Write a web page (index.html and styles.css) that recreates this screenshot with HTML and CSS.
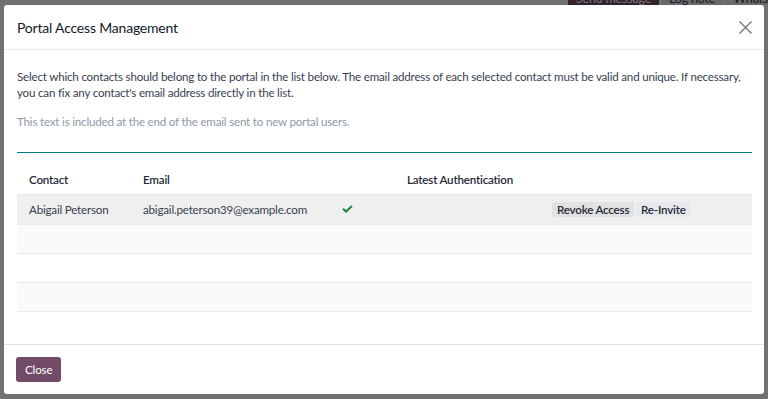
FILE: index.html
```html
<!DOCTYPE html>
<html lang="en">
<head>
    <meta charset="UTF-8">
    <meta name="viewport" content="width=device-width, initial-scale=1.0">
    <title>Portal Access Management</title>
    <link rel="stylesheet" href="styles.css">
</head>
<body>

    <!-- Page behind the dialog -->
    <div class="page">
        <div class="chatter-bar">
            <span class="chatter-btn primary">Send message</span>
            <span class="chatter-btn">Log note</span>
            <span class="chatter-btn">WhatsApp</span>
        </div>
    </div>
    <div class="backdrop"></div>

    <!-- Dialog -->
    <div class="modal">
        <header class="modal-header">
            <h4 class="modal-title">Portal Access Management</h4>
            <button class="btn-close" aria-label="Close">
                <svg width="13" height="13" viewBox="0 0 13 13">
                    <path d="M0.5 0.5 L12.5 12.5 M12.5 0.5 L0.5 12.5" stroke="#6c757d" stroke-width="1.3" fill="none"/>
                </svg>
            </button>
        </header>

        <main class="modal-body">
            <p class="intro">Select which contacts should belong to the portal in the list below. The email address of each selected contact must be valid and unique. If necessary, you can fix any contact's email address directly in the list.</p>

            <div class="welcome-field">
                <span class="placeholder">This text is included at the end of the email sent to new portal users.</span>
            </div>

            <table class="portal-list">
                <colgroup>
                    <col class="col-contact">
                    <col class="col-email">
                    <col class="col-valid">
                    <col class="col-auth">
                    <col>
                </colgroup>
                <thead>
                    <tr>
                        <th>Contact</th>
                        <th>Email</th>
                        <th></th>
                        <th>Latest Authentication</th>
                        <th></th>
                    </tr>
                </thead>
                <tbody>
                    <tr class="row-active">
                        <td>Abigail Peterson</td>
                        <td>abigail.peterson39@example.com</td>
                        <td>
                            <svg class="check" width="11" height="8" viewBox="0 0 11 8">
                                <path d="M1 3.8 L4 6.6 L10 1" stroke="#1f8a3e" stroke-width="2" fill="none"/>
                            </svg>
                        </td>
                        <td></td>
                        <td class="actions">
                            <span class="btn-row btn-revoke">Revoke Access</span>
                            <span class="btn-row btn-invite">Re-Invite</span>
                        </td>
                    </tr>
                    <tr class="row-empty"><td colspan="5"></td></tr>
                    <tr class="row-empty"><td colspan="5"></td></tr>
                    <tr class="row-empty"><td colspan="5"></td></tr>
                </tbody>
            </table>
        </main>

        <footer class="modal-footer">
            <button class="btn-primary">Close</button>
        </footer>
    </div>

</body>
</html>
```

FILE: styles.css
```css
/* Global Reset */
* {
    margin: 0;
    padding: 0;
    box-sizing: border-box;
}

body {
    font-family: 'Lato', 'Noto Sans', sans-serif;
    font-size: 11.6px;
    letter-spacing: -0.2px;
    color: #374151;
    background-color: #ffffff;
    width: 768px;
    height: 399px;
    overflow: hidden;
    position: relative;
}

/* Page behind */
.page {
    height: 399px;
    background: #f9fafb;
    overflow: hidden;
}

.chatter-bar {
    display: flex;
    gap: 2px;
    padding-left: 568px;
    margin-top: -8px;
}

.chatter-btn {
    font-size: 12.5px;
    line-height: 13px;
    padding: 0 8px;
    color: #374151;
    background: #e7e9ed;
    white-space: nowrap;
}

.chatter-btn.primary {
    background: #714b67;
    color: #ffffff;
}

.backdrop {
    position: absolute;
    inset: 0;
    background: rgba(0, 0, 0, 0.55);
}

/* Dialog */
.modal {
    position: absolute;
    left: 4px;
    top: 5px;
    width: 760px;
    height: 389px;
    background: #ffffff;
    border-radius: 3px;
    display: flex;
    flex-direction: column;
}

.modal-header {
    height: 45px;
    display: flex;
    align-items: center;
    justify-content: space-between;
    padding: 0 12px 0 13px;
    border-bottom: 1px solid #e7e9ed;
}

.modal-title {
    font-size: 14px;
    letter-spacing: -0.2px;
    font-weight: 400;
    color: #111827;
}

.btn-close {
    border: none;
    background: none;
    width: 13px;
    height: 13px;
    display: flex;
}

.modal-body {
    flex: 1;
    padding: 19px 12px 0 13px;
}

.intro {
    line-height: 16px;
    color: #374151;
}

.welcome-field {
    margin-top: 13px;
    height: 39px;
    line-height: 16px;
    border-bottom: 1px solid #017e84;
}

.placeholder {
    color: #8f9aa6;
}

/* List */
.portal-list {
    width: 100%;
    margin-top: 12px;
    border-collapse: collapse;
    table-layout: fixed;
}

.col-contact { width: 114px; }
.col-email { width: 199px; }
.col-valid { width: 65px; }
.col-auth { width: 145px; }

.portal-list th {
    text-align: left;
    font-weight: 600;
    color: #1f2937;
    height: 29px;
    padding: 0 12px;
    border-bottom: 1px solid #e7e9ed;
    white-space: nowrap;
}

.portal-list td {
    height: 30px;
    padding: 0 12px;
    border-bottom: 1px solid #e7e9ed;
    white-space: nowrap;
}

.portal-list .row-empty td {
    height: 29px;
}

.row-active td {
    background: #efefef;
}

.row-empty:nth-child(even) td {
    background: #fafafa;
}

.check {
    display: block;
}

.btn-row {
    display: inline-block;
    line-height: 15px;
    padding: 0 5px;
    border-radius: 3px;
    font-weight: 600;
    color: #1f2937;
}

.btn-revoke {
    background: #e1e1e1;
}

.btn-invite {
    background: #e7e9ed;
    margin-left: -1px;
}

/* Footer */
.modal-footer {
    height: 50px;
    border-top: 1px solid #e0e0e0;
    padding: 12px 12px 0 12px;
}

.btn-primary {
    font-family: inherit;
    font-size: 11.6px;
    letter-spacing: -0.15px;
    border: none;
    border-radius: 3px;
    background: #714b67;
    color: #ffffff;
    height: 25px;
    padding: 0 9px;
}
```
